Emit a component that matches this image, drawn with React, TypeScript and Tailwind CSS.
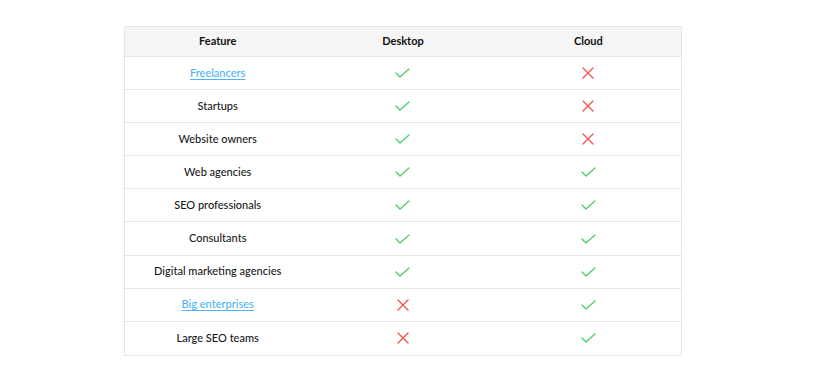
import React from "react";

type Row = { name: string; link?: boolean; desktop: boolean; cloud: boolean };

const rows: Row[] = [
  { name: "Freelancers", link: true, desktop: true, cloud: false },
  { name: "Startups", desktop: true, cloud: false },
  { name: "Website owners", desktop: true, cloud: false },
  { name: "Web agencies", desktop: true, cloud: true },
  { name: "SEO professionals", desktop: true, cloud: true },
  { name: "Consultants", desktop: true, cloud: true },
  { name: "Digital marketing agencies", desktop: true, cloud: true },
  { name: "Big enterprises", link: true, desktop: false, cloud: true },
  { name: "Large SEO teams", desktop: false, cloud: true },
];

function Check() {
  return (
    <svg width="15" height="10" viewBox="0 0 15 10" fill="none">
      <path d="M1 5l4 4L14 1" stroke="#4fcf6d" strokeWidth="1.4" strokeLinecap="round" strokeLinejoin="round" />
    </svg>
  );
}

function Cross() {
  return (
    <svg width="12" height="12" viewBox="0 0 12 12" fill="none">
      <path d="M1 1l10 10M11 1L1 11" stroke="#f5564e" strokeWidth="1.4" strokeLinecap="round" />
    </svg>
  );
}

export default function App() {
  return (
    <div className="w-[820px] h-[377px] bg-white pt-[26px] pl-[124px]" style={{ fontFamily: "Lato, 'Noto Sans', sans-serif" }}>
      <div className="w-[558px] border border-[#e6e6e6] text-[11px] font-medium text-[#1a1a1a]">
        <div className="grid grid-cols-3 h-[30px] bg-[#f5f5f5] border-b border-[#e6e6e6] items-center font-bold text-[11px] text-[#111]">
          <div className="text-center">Feature</div>
          <div className="text-center">Desktop</div>
          <div className="text-center">Cloud</div>
        </div>
        {rows.map((r, i) => (
          <div
            key={r.name}
            className={`grid grid-cols-3 h-[33.1px] items-center ${i < rows.length - 1 ? "border-b border-[#e6e6e6]" : ""}`}
          >
            <div className="text-center">
              {r.link ? (
                <a href="#" className="text-[#4cb6f5] underline underline-offset-2">{r.name}</a>
              ) : (
                <span>{r.name}</span>
              )}
            </div>
            <div className="flex justify-center">{r.desktop ? <Check /> : <Cross />}</div>
            <div className="flex justify-center">{r.cloud ? <Check /> : <Cross />}</div>
          </div>
        ))}
      </div>
    </div>
  );
}
